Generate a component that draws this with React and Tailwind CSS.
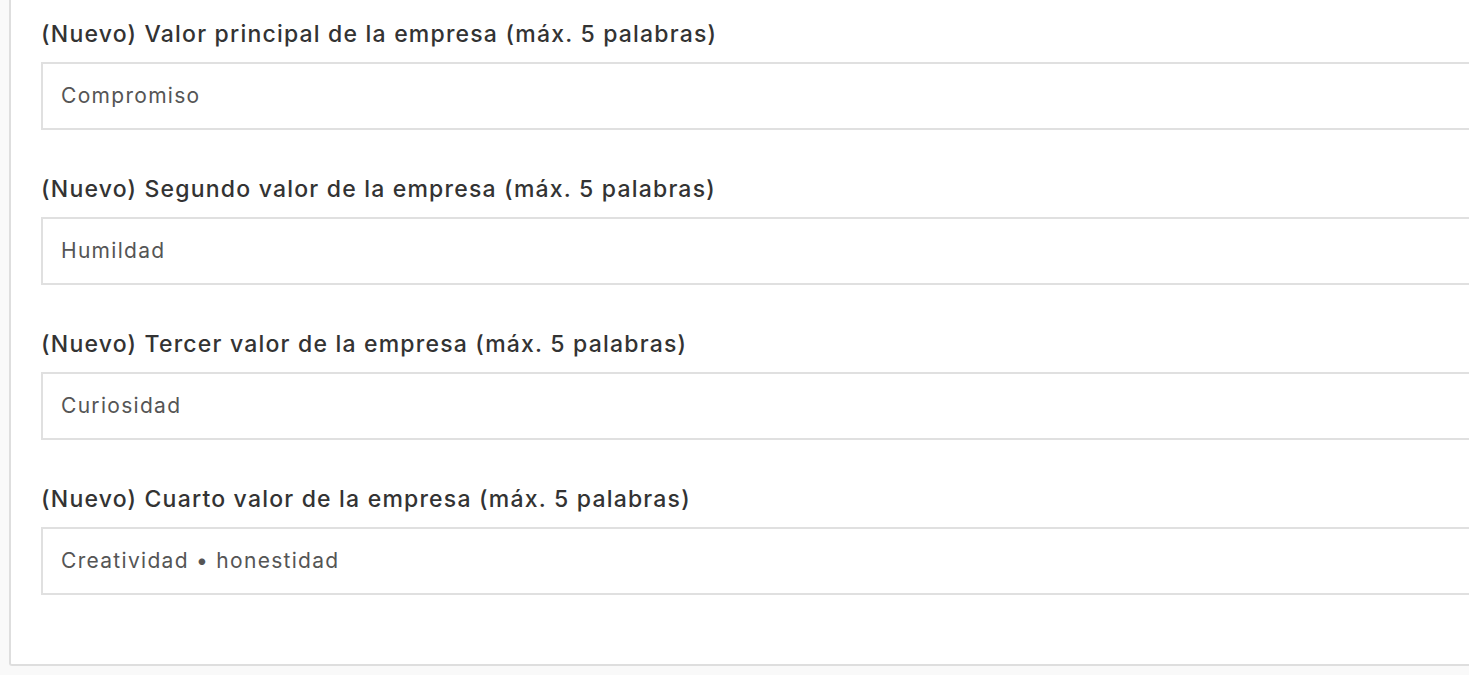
import React from 'react';

const fields = [
  { label: '(Nuevo) Valor principal de la empresa (máx. 5 palabras)', value: 'Compromiso' },
  { label: '(Nuevo) Segundo valor de la empresa (máx. 5 palabras)', value: 'Humildad' },
  { label: '(Nuevo) Tercer valor de la empresa (máx. 5 palabras)', value: 'Curiosidad' },
  { label: '(Nuevo) Cuarto valor de la empresa (máx. 5 palabras)', value: 'Creatividad • honestidad' },
];

export default function App() {
  return (
    <div
      className="w-full h-[675px] overflow-hidden bg-[#f9f9f9]"
      style={{ fontFamily: 'Inter, "Open Sans", sans-serif' }}
    >
      <div className="ml-[9px] w-[1520px] bg-white border-2 border-t-0 border-[#dedede] rounded-b-[3px] pl-[30px] pt-[19px] pb-[69px]">
        {fields.map((f, i) => (
          <div key={i} className={i > 0 ? 'mt-[44px]' : ''}>
            <label className="block text-[23px] leading-[30px] tracking-[1.2px] font-medium text-[#333]">{f.label}</label>
            <div className="mt-[13px] h-[68px] border-2 border-[#e0e0e0] flex items-center pl-[18px] text-[21px] tracking-[1.3px] text-[#555]">
              {f.value}
            </div>
          </div>
        ))}
      </div>
    </div>
  );
}
